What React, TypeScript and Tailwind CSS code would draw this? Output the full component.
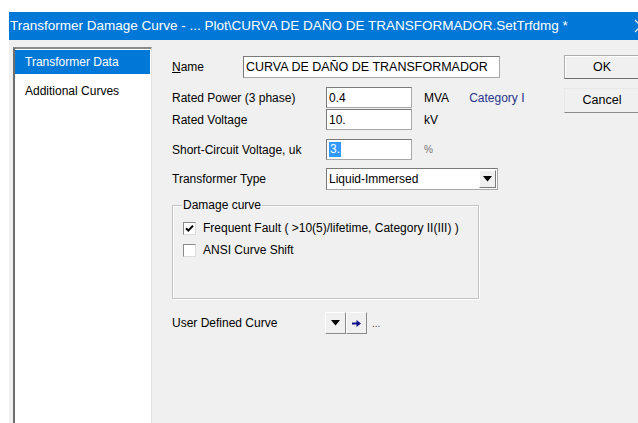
import React from "react";

const font = "font-['Liberation_Sans',Arial,sans-serif]";

function TextBox({ value, width, selected }: { value: string; width: string; selected?: boolean }) {
  return (
    <div className={`${width} h-[21px] shrink-0 bg-white border border-[#a8a8a8] border-t-[#7a7a7a] border-l-[#7a7a7a] flex items-center pl-[2px] text-[12px] text-black`}>
      {selected ? <span className="bg-[#3399ff] text-white px-[1px] leading-[15px]">{value}</span> : value}
    </div>
  );
}

function CheckBox({ checked }: { checked?: boolean }) {
  return (
    <div className="w-[13px] h-[13px] shrink-0 bg-white border border-[#8a8a8a] border-b-[#dcdcdc] border-r-[#dcdcdc] flex items-center justify-center">
      {checked && (
        <svg width="9" height="9" viewBox="0 0 9 9">
          <path d="M1 4.2 L3.4 6.6 L8 1.6" stroke="#000" strokeWidth="2" fill="none" />
        </svg>
      )}
    </div>
  );
}

function DownTriangle() {
  return (
    <svg width="9" height="6" viewBox="0 0 9 6">
      <path d="M0 0 H9 L4.5 5.5 Z" fill="#000" />
    </svg>
  );
}

function Row({ label, children, h = "h-[21px]" }: { label: string; children: React.ReactNode; h?: string }) {
  return (
    <div className={`flex items-center whitespace-nowrap ${h}`}>
      <div className="w-[154px] shrink-0 text-[12px] text-black">{label}</div>
      {children}
    </div>
  );
}

export default function App() {
  return (
    <div className={`w-[638px] h-[423px] overflow-hidden bg-white flex flex-col ${font}`}>
      <div className="h-[12px] shrink-0" />
      <div className="flex-1 flex min-h-0">
        <div className="w-[9px] shrink-0 bg-white" />
        <div className="flex-1 flex flex-col min-w-0">
          {/* title bar */}
          <div className="h-[28px] shrink-0 bg-[#0078d7] text-white flex items-center justify-between">
            <span className="text-[13.5px] whitespace-nowrap pl-[1px]">
              Transformer Damage Curve - ... Plot\CURVA DE DAÑO DE TRANSFORMADOR.SetTrfdmg *
            </span>
            <svg width="14" height="14" viewBox="0 0 14 14" className="mr-[-10px] shrink-0">
              <path d="M1 1 L13 13 M13 1 L1 13" stroke="#fff" strokeWidth="1.2" />
            </svg>
          </div>

          <div className="flex-1 bg-[#f0f0f0] flex min-h-0">
            {/* page list */}
            <div className="ml-[4px] mt-[7px] w-[139px] shrink-0 bg-white border-l-2 border-t-2 border-l-[#6e6e6e] border-t-[#8a8a8a] border-r border-r-[#e2e2e2] pt-[1px] text-[12px]">
              <div className="h-[24px] bg-[#0078d7] text-white flex items-center pl-[10px] mr-[1px]">Transformer Data</div>
              <div className="h-[24px] mt-[5px] text-black flex items-center pl-[10px]">Additional Curves</div>
            </div>

            {/* form */}
            <div className="ml-[20px] mt-[16px] w-[328px] shrink-0 flex flex-col">
              <div className="flex items-center h-[22px]">
                <div className="w-[71px] shrink-0 text-[12px] text-black">
                  <span className="underline">N</span>ame
                </div>
                <div className="w-[257px] h-[22px] shrink-0 bg-white border border-[#a8a8a8] border-t-[#7a7a7a] border-l-[#7a7a7a] flex items-center pl-[2px] text-[12.5px] text-black whitespace-nowrap">
                  CURVA DE DAÑO DE TRANSFORMADOR
                </div>
              </div>

              <div className="mt-[9px]">
                <Row label="Rated Power (3 phase)">
                  <TextBox value="0.4" width="w-[86px]" />
                  <span className="ml-[12px] text-[12px] text-black">MVA</span>
                  <span className="ml-[20px] text-[12px] text-[#28328c]">Category I</span>
                </Row>
              </div>
              <div className="mt-[1px]">
                <Row label="Rated Voltage">
                  <TextBox value="10." width="w-[86px]" />
                  <span className="ml-[12px] text-[12px] text-black">kV</span>
                </Row>
              </div>
              <div className="mt-[9px]">
                <Row label="Short-Circuit Voltage, uk">
                  <TextBox value="3." width="w-[86px]" selected />
                  <span className="ml-[12px] text-[10px] text-[#777]">%</span>
                </Row>
              </div>
              <div className="mt-[8px]">
                <Row label="Transformer Type" h="h-[22px]">
                  <div className="w-[172px] h-[22px] shrink-0 bg-white border border-[#a8a8a8] border-t-[#7a7a7a] border-l-[#7a7a7a] flex items-center text-[12px] text-black">
                    <span className="flex-1 pl-[2px]">Liquid-Immersed</span>
                    <div className="w-[17px] h-[18px] mr-[1px] bg-[#f0f0f0] border border-[#fff] border-r-[#7a7a7a] border-b-[#7a7a7a] flex items-center justify-center">
                      <DownTriangle />
                    </div>
                  </div>
                </Row>
              </div>

              {/* damage curve group */}
              <div className="mt-[15px] w-[307px] h-[94px] border border-[#c4c4c4] shadow-[inset_1px_1px_0_#fff,1px_1px_0_#fff] flex flex-col">
                <span className="-mt-[8px] ml-[9px] self-start bg-[#f0f0f0] px-[1px] text-[12px] text-black leading-[15px]">
                  Damage curve
                </span>
                <div className="ml-[10px] mt-[7px] flex items-center gap-[7px] h-[16px] whitespace-nowrap">
                  <CheckBox checked />
                  <span className="text-[12px] text-black">Frequent Fault ( &gt;10(5)/lifetime, Category II(III) )</span>
                </div>
                <div className="ml-[10px] mt-[6px] flex items-center gap-[7px] h-[16px]">
                  <CheckBox />
                  <span className="text-[12px] text-black">ANSI Curve Shift</span>
                </div>
              </div>

              <div className="mt-[13px]">
                <Row label="User Defined Curve" h="h-[22px]">
                  <div className="flex -ml-[1px]">
                    <div className="w-[21px] h-[22px] bg-[#f0f0f0] border border-[#fff] border-r-[#8a8a8a] border-b-[#8a8a8a] flex items-center justify-center">
                      <DownTriangle />
                    </div>
                    <div className="w-[21px] h-[22px] bg-[#f0f0f0] border border-[#fff] border-r-[#8a8a8a] border-b-[#8a8a8a] flex items-center justify-center">
                      <svg width="9" height="7" viewBox="0 0 9 7">
                        <path d="M0 2.4 H4.5 V0 L9 3.5 L4.5 7 V4.6 H0 Z" fill="#10108a" />
                      </svg>
                    </div>
                  </div>
                  <span className="ml-[5px] text-[10px] text-[#444] leading-none mt-[2px]">...</span>
                </Row>
              </div>
            </div>

            {/* OK / Cancel */}
            <div className="ml-[64px] mt-[15px] flex flex-col gap-[9px] shrink-0">
              <div className="w-[76px] h-[24px] bg-[#f0f0f0] border border-[#adadad] border-r-[#6e6e6e] border-b-[#6e6e6e] shadow-[inset_1px_1px_0_#fff] flex items-center justify-center text-[12.5px] text-black">
                OK
              </div>
              <div className="w-[76px] h-[25px] bg-[#f0f0f0] border border-[#e8e8e8] border-r-[#8a8a8a] border-b-[#8a8a8a] flex items-center justify-center text-[12.5px] text-black">
                Cancel
              </div>
            </div>
          </div>
        </div>
      </div>
    </div>
  );
}
